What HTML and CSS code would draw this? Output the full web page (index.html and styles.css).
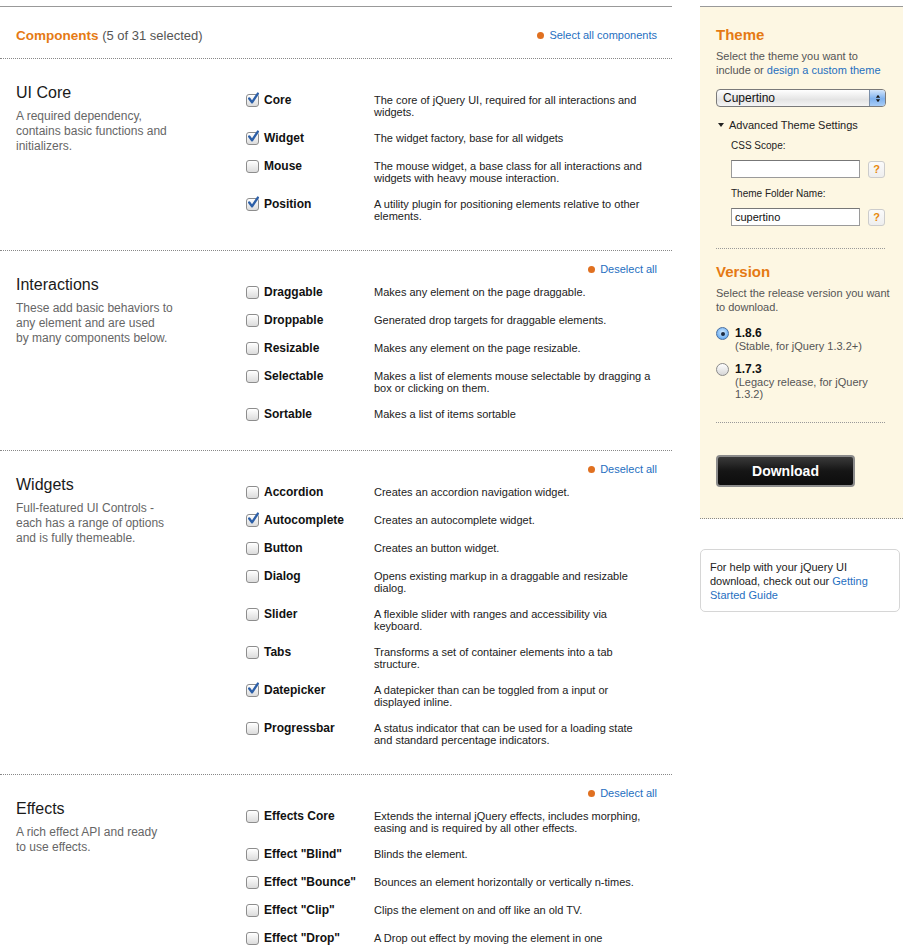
FILE: index.html
```html
<!DOCTYPE html>
<html>
<head>
<meta charset="utf-8">
<link rel="stylesheet" href="styles.css">
</head>
<body>
<div class="page">
  <div class="main">
    <div class="comp-header">
      <div class="comp-title"><span class="orange">Components</span> <span class="count">(5 of 31 selected)</span></div>
      <a class="bullet-link" href="#"><span class="dot"></span>Select all components</a>
    </div>

    <section class="section">
      <div class="info">
        <h2>UI Core</h2>
        <p>A required dependency,<br>contains basic functions and<br>initializers.</p>
      </div>
      <div class="items">
        <div class="row"><span class="cb on"><svg viewBox="0 0 13 13"><path d="M3 6 L5.6 9.6 L11 1.5"/></svg></span><span class="label">Core</span><span class="desc">The core of jQuery UI, required for all interactions and widgets.</span></div>
        <div class="row"><span class="cb on"><svg viewBox="0 0 13 13"><path d="M3 6 L5.6 9.6 L11 1.5"/></svg></span><span class="label">Widget</span><span class="desc">The widget factory, base for all widgets</span></div>
        <div class="row"><span class="cb"></span><span class="label">Mouse</span><span class="desc">The mouse widget, a base class for all interactions and widgets with heavy mouse interaction.</span></div>
        <div class="row"><span class="cb on"><svg viewBox="0 0 13 13"><path d="M3 6 L5.6 9.6 L11 1.5"/></svg></span><span class="label">Position</span><span class="desc">A utility plugin for positioning elements relative to other elements.</span></div>
      </div>
    </section>

    <section class="section">
      <a class="bullet-link deselect" href="#"><span class="dot"></span>Deselect all</a>
      <div class="info">
        <h2>Interactions</h2>
        <p>These add basic behaviors to<br>any element and are used<br>by many components below.</p>
      </div>
      <div class="items">
        <div class="row"><span class="cb"></span><span class="label">Draggable</span><span class="desc">Makes any element on the page draggable.</span></div>
        <div class="row"><span class="cb"></span><span class="label">Droppable</span><span class="desc">Generated drop targets for draggable elements.</span></div>
        <div class="row"><span class="cb"></span><span class="label">Resizable</span><span class="desc">Makes any element on the page resizable.</span></div>
        <div class="row"><span class="cb"></span><span class="label">Selectable</span><span class="desc">Makes a list of elements mouse selectable by dragging a box or clicking on them.</span></div>
        <div class="row"><span class="cb"></span><span class="label">Sortable</span><span class="desc">Makes a list of items sortable</span></div>
      </div>
    </section>

    <section class="section">
      <a class="bullet-link deselect" href="#"><span class="dot"></span>Deselect all</a>
      <div class="info">
        <h2>Widgets</h2>
        <p>Full-featured UI Controls -<br>each has a range of options<br>and is fully themeable.</p>
      </div>
      <div class="items">
        <div class="row"><span class="cb"></span><span class="label">Accordion</span><span class="desc">Creates an accordion navigation widget.</span></div>
        <div class="row"><span class="cb on"><svg viewBox="0 0 13 13"><path d="M3 6 L5.6 9.6 L11 1.5"/></svg></span><span class="label">Autocomplete</span><span class="desc">Creates an autocomplete widget.</span></div>
        <div class="row"><span class="cb"></span><span class="label">Button</span><span class="desc">Creates an button widget.</span></div>
        <div class="row"><span class="cb"></span><span class="label">Dialog</span><span class="desc">Opens existing markup in a draggable and resizable dialog.</span></div>
        <div class="row"><span class="cb"></span><span class="label">Slider</span><span class="desc">A flexible slider with ranges and accessibility via keyboard.</span></div>
        <div class="row"><span class="cb"></span><span class="label">Tabs</span><span class="desc">Transforms a set of container elements into a tab structure.</span></div>
        <div class="row"><span class="cb on"><svg viewBox="0 0 13 13"><path d="M3 6 L5.6 9.6 L11 1.5"/></svg></span><span class="label">Datepicker</span><span class="desc">A datepicker than can be toggled from a input or displayed inline.</span></div>
        <div class="row"><span class="cb"></span><span class="label">Progressbar</span><span class="desc">A status indicator that can be used for a loading state and standard percentage indicators.</span></div>
      </div>
    </section>

    <section class="section">
      <a class="bullet-link deselect" href="#"><span class="dot"></span>Deselect all</a>
      <div class="info">
        <h2>Effects</h2>
        <p>A rich effect API and ready<br>to use effects.</p>
      </div>
      <div class="items">
        <div class="row"><span class="cb"></span><span class="label">Effects Core</span><span class="desc">Extends the internal jQuery effects, includes morphing, easing and is required by all other effects.</span></div>
        <div class="row"><span class="cb"></span><span class="label">Effect "Blind"</span><span class="desc">Blinds the element.</span></div>
        <div class="row"><span class="cb"></span><span class="label">Effect "Bounce"</span><span class="desc">Bounces an element horizontally or vertically n-times.</span></div>
        <div class="row"><span class="cb"></span><span class="label">Effect "Clip"</span><span class="desc">Clips the element on and off like an old TV.</span></div>
        <div class="row"><span class="cb"></span><span class="label">Effect "Drop"</span><span class="desc">A Drop out effect by moving the element in one<br>direction and hiding it at the same time.</span></div>
      </div>
    </section>
  </div>

  <aside class="side">
    <div class="panel">
      <h3>Theme</h3>
      <p class="pdesc">Select the theme you want to<br>include or <a href="#">design a custom theme</a></p>
      <div class="select"><span class="sel-text">Cupertino</span><span class="sel-btn"><svg viewBox="0 0 7 10"><path d="M3.5 0.5 L6 4 L1 4 Z M3.5 9.5 L6 6 L1 6 Z"/></svg></span></div>
      <div class="adv"><span class="tri"></span>Advanced Theme Settings</div>
      <div class="field-label">CSS Scope:</div>
      <div class="field"><span class="input"></span><span class="help">?</span></div>
      <div class="field-label second">Theme Folder Name:</div>
      <div class="field"><span class="input">cupertino</span><span class="help">?</span></div>
      <div class="rule first"></div>
      <h3>Version</h3>
      <p class="pdesc">Select the release version you want<br>to download.</p>
      <div class="radio-row"><span class="radio on"></span><div><div class="ver">1.8.6</div><div class="vsub">(Stable, for jQuery 1.3.2+)</div></div></div>
      <div class="radio-row r2"><span class="radio"></span><div><div class="ver">1.7.3</div><div class="vsub">(Legacy release, for jQuery<br>1.3.2)</div></div></div>
      <div class="rule second"></div>
      <div class="download">Download</div>
    </div>
    <div class="helpbox">For help with your jQuery UI<br>download, check out our <a href="#">Getting</a><br><a href="#">Started Guide</a></div>
  </aside>
</div>
</body>
</html>
```

FILE: styles.css
```css
* { box-sizing: border-box; }
body {
  margin: 0;
  font-family: "Liberation Sans", Arial, sans-serif;
  color: #222;
  background: #fff;
}
a { color: #1f6fbf; text-decoration: none; }
.page {
  display: flex;
  align-items: flex-start;
  gap: 28px;
  padding-top: 6px;
}
.main {
  width: 672px;
  border-top: 1px solid #999;
}
.comp-header {
  height: 52px;
  display: flex;
  align-items: center;
  justify-content: space-between;
  padding: 5px 15px 0 16px;
  border-bottom: 1px dotted #888;
}
.comp-title { font-size: 13px; }
.orange { color: #e57a14; font-weight: bold; font-size: 13.5px; }
.count { color: #555; }
.bullet-link {
  font-size: 11px;
  display: flex;
  align-items: center;
  gap: 5px;
}
.dot {
  width: 7px;
  height: 7px;
  border-radius: 50%;
  background: #e07020;
}
.section {
  position: relative;
  display: flex;
  gap: 65px;
  padding: 25px 0 15px 16px;
  border-bottom: 1px dotted #888;
}
.deselect {
  position: absolute;
  top: 11px;
  right: 15px;
  line-height: 14px;
}
.info { width: 165px; flex: none; }
.info h2 {
  margin: 0;
  font-size: 16px;
  font-weight: normal;
  line-height: 18px;
  color: #1a1a1a;
}
.info p {
  margin: 7px 0 0;
  font-size: 12px;
  line-height: 15px;
  color: #666;
}
.items { padding-top: 9px; }
.row {
  display: flex;
  align-items: flex-start;
  margin-bottom: 14px;
}
.cb {
  width: 13px;
  height: 13px;
  margin: 1px 5px 0 0;
  border: 1px solid #8d8d8d;
  border-radius: 3px;
  background: linear-gradient(#ffffff, #dcdcdc);
  box-shadow: inset 0 1px 1px rgba(255,255,255,0.8);
  position: relative;
  flex: none;
}
.cb svg {
  position: absolute;
  left: -1px;
  top: -3px;
  width: 14px;
  height: 14px;
  overflow: visible;
}
.cb svg path {
  fill: none;
  stroke: #2c5fa8;
  stroke-width: 2.2;
  stroke-linecap: round;
  stroke-linejoin: round;
}
.label {
  width: 110px;
  flex: none;
  font-size: 12px;
  font-weight: bold;
  line-height: 14px;
  color: #111;
}
.desc {
  width: 277px;
  font-size: 11px;
  line-height: 12px;
  padding-top: 1px;
  margin-bottom: -1px;
  color: #222;
}

/* Sidebar */
.side { width: 203px; flex: none; }
.panel {
  background: #fdf7e3;
  border-top: 1px solid #999;
  border-bottom: 1px dotted #888;
  padding: 18px 12px 31px 16px;
}
.panel h3 {
  margin: 0;
  font-size: 15px;
  line-height: 20px;
  color: #e57a14;
}
.pdesc {
  margin: 4px 0 0;
  font-size: 11px;
  line-height: 14px;
  color: #555;
  white-space: nowrap;
}
.select {
  width: 170px;
  margin-top: 12px;
  height: 18px;
  border: 1px solid #7a7a7a;
  border-radius: 4px;
  background: linear-gradient(#ffffff, #e4e4e4 60%, #f4f4f4);
  display: flex;
  align-items: center;
  justify-content: space-between;
  overflow: hidden;
  font-size: 12px;
  color: #111;
}
.sel-text { padding-left: 6px; }
.sel-btn {
  width: 16px;
  height: 100%;
  background: linear-gradient(#d4e6fb, #7eb1ee 55%, #a9cdf6);
  border-left: 1px solid #7a8ea8;
  display: flex;
  align-items: center;
  justify-content: center;
}
.sel-btn svg { width: 6px; height: 9px; }
.sel-btn path { fill: #1a1a1a; }
.adv {
  margin-top: 11px;
  font-size: 11px;
  line-height: 14px;
  color: #222;
  display: flex;
  align-items: center;
  padding-left: 2px;
}
.tri {
  width: 0;
  height: 0;
  border-left: 3.5px solid transparent;
  border-right: 3.5px solid transparent;
  border-top: 4px solid #222;
  margin-right: 5px;
}
.field-label {
  margin: 7px 0 0 15px;
  font-size: 10px;
  line-height: 14px;
  color: #222;
}
.field-label.second { margin-top: 9px; }
.field {
  margin: 7px 0 0 15px;
  display: flex;
  align-items: center;
  gap: 8px;
}
.input {
  width: 129px;
  height: 18px;
  background: #fff;
  border: 1px solid #9a9a9a;
  border-top-color: #777;
  font-size: 11px;
  line-height: 16px;
  padding-left: 3px;
  color: #111;
}
.help {
  width: 17px;
  height: 17px;
  border: 1px solid #ccc;
  border-radius: 3px;
  background: linear-gradient(#fbfbfb, #eeeeee);
  color: #e8890c;
  font-weight: bold;
  font-size: 11px;
  display: flex;
  align-items: center;
  justify-content: center;
}
.rule { border-top: 1px dotted #999; width: 169px; }
.rule.first { margin: 22px 0 13px; }
.rule.second { margin: 22px 0 32px; }
.radio-row {
  display: flex;
  align-items: flex-start;
  gap: 6px;
  margin-top: 12px;
}
.radio-row.r2 { margin-top: 10px; }
.radio {
  width: 13px;
  height: 13px;
  flex: none;
  border-radius: 50%;
  border: 1px solid #8a8a8a;
  background: linear-gradient(#ffffff, #d6d6d6);
  margin-top: 1px;
  position: relative;
}
.radio.on {
  border-color: #4a6fa0;
  background: radial-gradient(circle at 50% 40%, #d5ecff, #6fb0f2 70%, #3d86d8);
}
.radio.on::after {
  content: "";
  position: absolute;
  left: 3.5px;
  top: 3.5px;
  width: 4px;
  height: 4px;
  border-radius: 50%;
  background: #1b2a40;
}
.ver {
  font-size: 12px;
  font-weight: bold;
  line-height: 14px;
  color: #111;
}
.vsub {
  font-size: 11px;
  line-height: 12px;
  color: #555;
}
.download {
  width: 139px;
  height: 32px;
  border: 2px solid #8c8c8c;
  border-radius: 4px;
  background: linear-gradient(#3a3a3a, #151515 50%, #0d0d0d);
  color: #fff;
  font-weight: bold;
  font-size: 14px;
  display: flex;
  align-items: center;
  justify-content: center;
}
.helpbox {
  margin-top: 30px;
  width: 200px;
  border: 1px solid #d6d6d6;
  border-radius: 5px;
  padding: 10px 9px 9px 9px;
  font-size: 11px;
  line-height: 14px;
  color: #222;
}
```
